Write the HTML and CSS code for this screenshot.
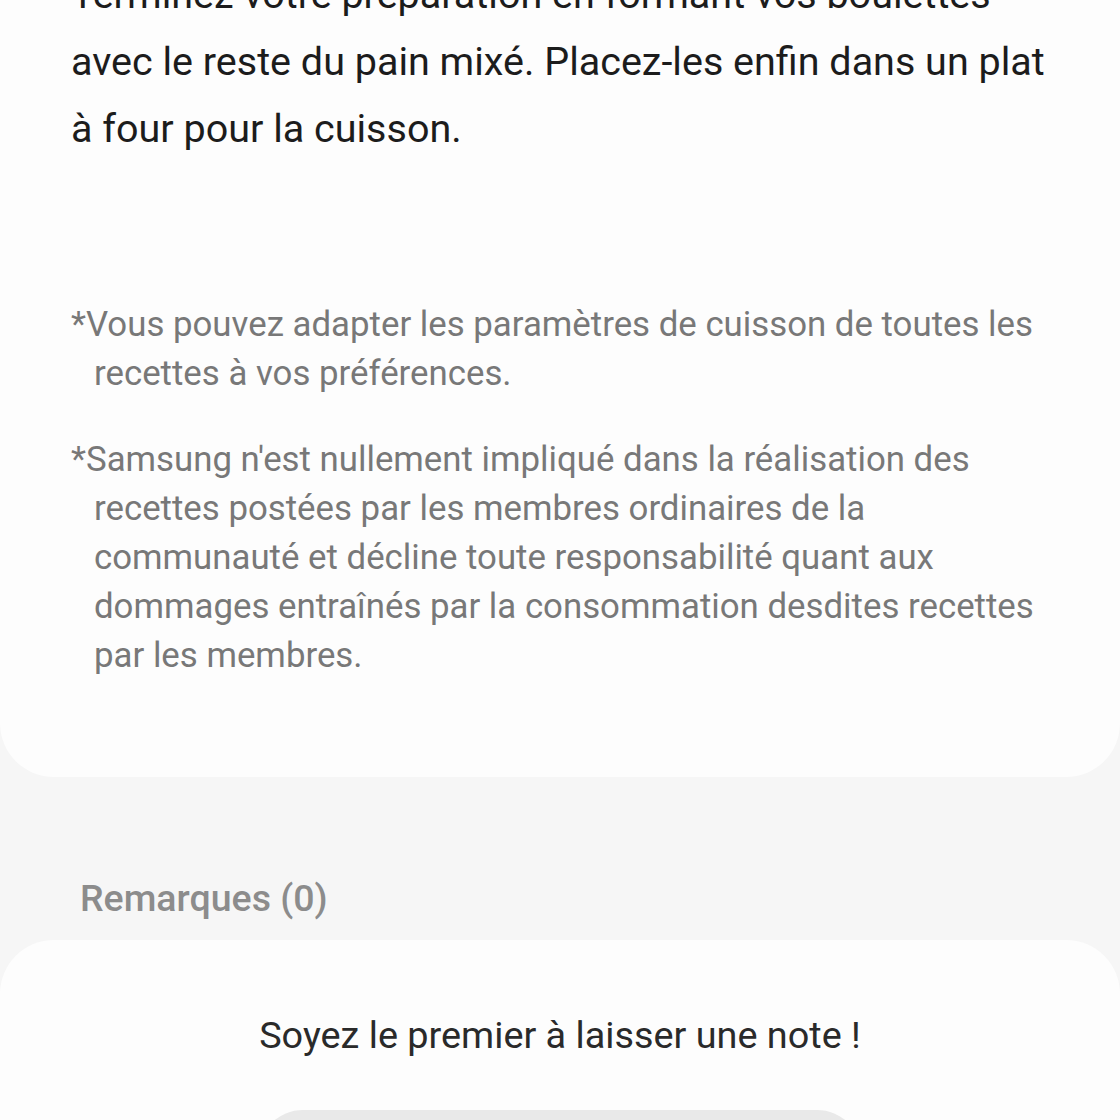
FILE: index.html
```html
<!DOCTYPE html>
<html lang="fr">
<head>
<meta charset="utf-8">
<link rel="stylesheet" href="styles.css">
</head>
<body>
<section class="card card-recipe">
  <p class="step">Terminez votre préparation en formant vos boulettes<br>avec le reste du pain mixé. Placez-les enfin dans un plat<br>à four pour la cuisson.</p>
  <div class="notes">
    <p class="note">*Vous pouvez adapter les paramètres de cuisson de toutes les<br>recettes à vos préférences.</p>
    <p class="note">*Samsung n'est nullement impliqué dans la réalisation des<br>recettes postées par les membres ordinaires de la<br>communauté et décline toute responsabilité quant aux<br>dommages entraînés par la consommation desdites recettes<br>par les membres.</p>
  </div>
</section>
<h2 class="section-title">Remarques (0)</h2>
<section class="card card-comments">
  <p class="empty">Soyez le premier à laisser une note !</p>
  <div class="btn"></div>
</section>
</body>
</html>
```
FILE: styles.css
```css
html, body {
  margin: 0;
  padding: 0;
  background: #f6f6f6;
  font-family: Roboto, "Noto Sans", "Liberation Sans", sans-serif;
  overflow: hidden;
}
body {
  width: 1120px;
  height: 1120px;
}
.card {
  background: #fdfdfd;
}
.card-recipe {
  border-radius: 0 0 54px 54px;
  padding: 0 20px 97px 71px;
}
.step {
  margin: -39px 0 0;
  font-size: 39.5px;
  line-height: 67px;
  color: #1c1c1c;
  white-space: nowrap;
}
.notes {
  margin-top: 138px;
}
.note {
  margin: 0 0 37px;
  padding-left: 23px;
  text-indent: -23px;
  font-size: 34.8px;
  line-height: 49px;
  color: #787878;
  white-space: nowrap;
}
.note:last-child {
  margin-bottom: 0;
}
.section-title {
  margin: 0;
  padding: 96px 0 0 80px;
  height: 67px;
  font-size: 37.5px;
  font-weight: 500;
  line-height: 50px;
  color: #8c8c8c;
}
.card-comments {
  border-radius: 54px 54px 0 0;
  padding-top: 70px;
  display: flex;
  flex-direction: column;
  align-items: center;
}
.empty {
  margin: 0;
  font-size: 37.8px;
  line-height: 50px;
  color: #2a2a2a;
}
.btn {
  margin-top: 50px;
  width: 604px;
  height: 90px;
  border-radius: 45px;
  background: #e9e9e9;
}
```
